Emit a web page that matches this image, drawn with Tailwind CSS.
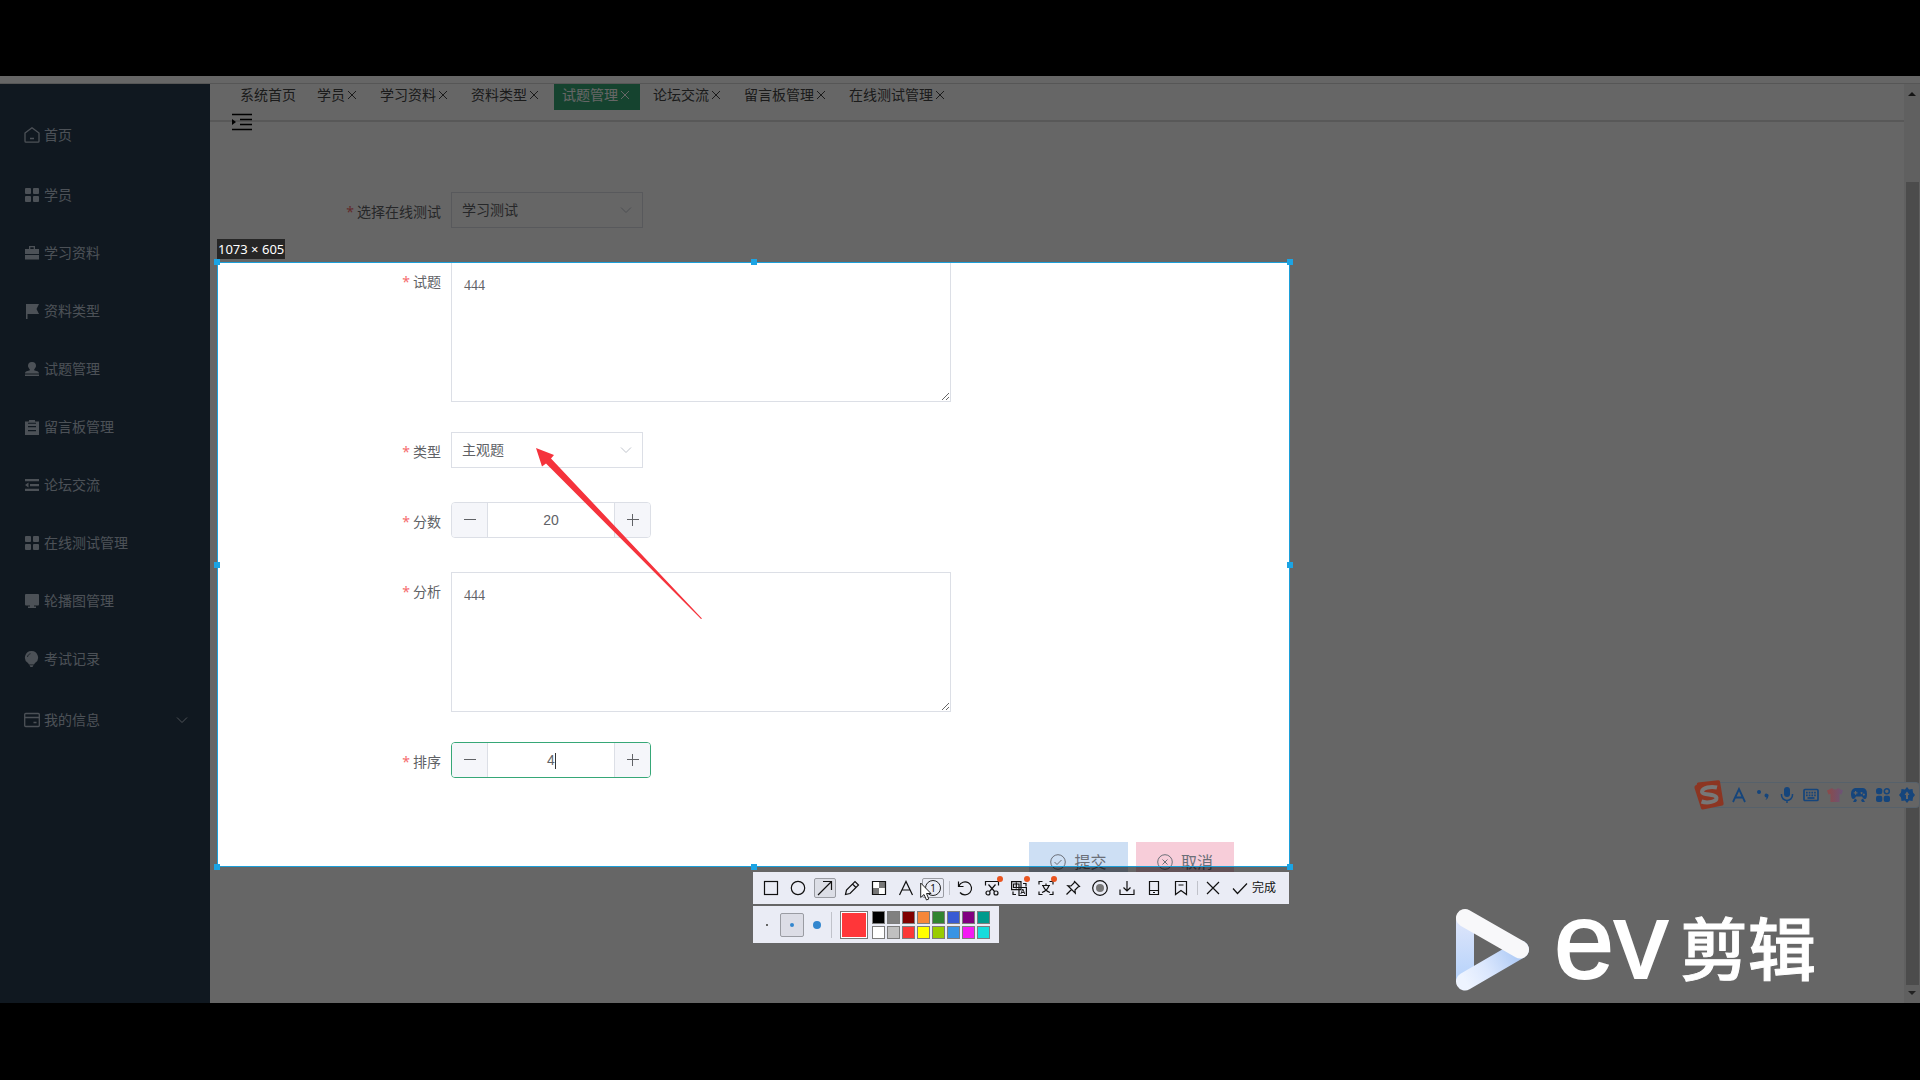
<!DOCTYPE html>
<html lang="zh-CN">
<head>
<meta charset="utf-8">
<title>试题管理</title>
<script src="https://cdn.jsdelivr.net/npm/@tailwindcss/browser@4"></script>
</head>
<body class="flex min-h-screen flex-col overflow-x-hidden bg-black pt-[76px] pb-[77px] font-['Noto_Sans','Noto_Sans_CJK_SC',sans-serif] text-sm text-[#606266]">
<div class="relative flex flex-1 flex-col overflow-hidden bg-white">
  <div class="h-2 shrink-0 border-b border-[#d8d8d8] bg-white"></div>
  <div class="flex flex-1">

    <!-- sidebar -->
    <nav class="w-[210px] shrink-0 bg-[#2a3c50] pt-5 text-[#bfcbd9]" aria-label="主菜单">
      <a href="#" class="flex h-[62px] items-center gap-1 pl-6">
        <svg class="size-4" viewBox="0 0 16 16" fill="none" stroke="currentColor" stroke-width="1.3"><path d="M1 6 8 .8 15 6v8.2a1 1 0 0 1-1 1H2a1 1 0 0 1-1-1zM6 11.5h4"/></svg>首页</a>
      <a href="#" class="flex h-[58px] items-center gap-1 pl-6">
        <svg class="size-4" viewBox="0 0 16 16" fill="currentColor"><rect x="1" y="1" width="6" height="6" rx="1"/><rect x="9" y="1" width="6" height="6" rx="1"/><rect x="1" y="9" width="6" height="6" rx="1"/><rect x="9" y="9" width="6" height="6" rx="1"/></svg>学员</a>
      <a href="#" class="flex h-[58px] items-center gap-1 pl-6">
        <svg class="size-4" viewBox="0 0 16 16" fill="currentColor"><path d="M5 1h6v3h4v5H1V4h4zm1.300 1.300V4h3.400V2.300zM1 10h14v4.500H1z"/></svg>学习资料</a>
      <a href="#" class="flex h-[58px] items-center gap-1 pl-6">
        <svg class="size-4" viewBox="0 0 16 16" fill="currentColor"><path d="M2 1h13l-2.500 5 2.500 5H3.500v5H2z"/></svg>资料类型</a>
      <a href="#" class="flex h-[58px] items-center gap-1 pl-6">
        <svg class="size-4" viewBox="0 0 16 16" fill="currentColor"><path d="M8 1a4 4 0 0 1 4 4c0 1.500-1.500 2.500-2 4 0 1 5 .5 5 3.500H1C1 9.500 6 10 6 9c-.5-1.500-2-2.500-2-4a4 4 0 0 1 4-4zM1 13.500h14V15H1z"/></svg>试题管理</a>
      <a href="#" class="flex h-[58px] items-center gap-1 pl-6">
        <svg class="size-4" viewBox="0 0 16 16" fill="currentColor" fill-rule="evenodd"><path d="M5 1h6v1.500h4V16H1V2.500h4zM4 3.800v1h8v-1zM4 7v1.200h8V7zM4 11v1.200h8V11z"/></svg>留言板管理</a>
      <a href="#" class="flex h-[58px] items-center gap-1 pl-6">
        <svg class="size-4" viewBox="0 0 16 16" fill="currentColor"><path d="M1 2h14v2.300H1zM6 6.900h9v2.300H6zM1 11.700h14V14H1zM1 8l3.500-2.500v5z"/></svg>论坛交流</a>
      <a href="#" class="flex h-[58px] items-center gap-1 pl-6">
        <svg class="size-4" viewBox="0 0 16 16" fill="currentColor"><rect x="1" y="1" width="6" height="6" rx="1"/><rect x="9" y="1" width="6" height="6" rx="1"/><rect x="1" y="9" width="6" height="6" rx="1"/><rect x="9" y="9" width="6" height="6" rx="1"/></svg>在线测试管理</a>
      <a href="#" class="flex h-[58px] items-center gap-1 pl-6">
        <svg class="size-4" viewBox="0 0 16 16" fill="currentColor"><rect x="1" y="1" width="14" height="11.500" rx="1"/><path d="M6 12h4v1.500h2V15H4v-1.500h2z"/></svg>轮播图管理</a>
      <a href="#" class="flex h-[58px] items-center gap-1 pl-6">
        <svg class="size-4" viewBox="0 0 16 16" fill="currentColor"><path d="M7.500 0a6.500 6.500 0 0 1 3.500 12l-1 1.500H5L4 12A6.500 6.500 0 0 1 7.500 0zM5.500 14.300h4L8.500 16h-2z"/><path d="M3.500 6c.3-1.800 1.200-2.800 3-3.300" fill="none" stroke="#2a3c50" stroke-width=".8"/></svg>考试记录</a>
      <a href="#" class="flex h-16 items-center gap-1 pr-[22px] pl-6">
        <svg class="size-4" viewBox="0 0 16 16" fill="none" stroke="currentColor" stroke-width="1.300"><rect x=".7" y="1.500" width="14.600" height="13" rx="1"/><path d="M1 5.500h14M9.500 10.500h3"/></svg>我的信息
        <svg class="ml-auto size-3" viewBox="0 0 12 12" fill="none" stroke="currentColor"><path d="m1 3.500 5 5 5-5"/></svg></a>
    </nav>

    <!-- page -->
    <main class="relative flex-1">
      <div class="flex h-[38px] items-start gap-[5px] border-b-2 border-[#dcdcdc] pl-[22px] leading-[22px] text-[#444]">
        <div class="flex h-[26px] px-2"><a href="#">系统首页</a></div>
        <div class="flex h-[26px] px-2"><a href="#">学员</a><button class="flex h-[22px] w-3.5 items-center justify-center" aria-label="关闭"><svg class="size-2.5" viewBox="0 0 10 10" stroke="currentColor"><path d="m1 1 8 8M9 1 1 9"/></svg></button></div>
        <div class="flex h-[26px] px-2"><a href="#">学习资料</a><button class="flex h-[22px] w-3.5 items-center justify-center" aria-label="关闭"><svg class="size-2.5" viewBox="0 0 10 10" stroke="currentColor"><path d="m1 1 8 8M9 1 1 9"/></svg></button></div>
        <div class="flex h-[26px] px-2"><a href="#">资料类型</a><button class="flex h-[22px] w-3.5 items-center justify-center" aria-label="关闭"><svg class="size-2.5" viewBox="0 0 10 10" stroke="currentColor"><path d="m1 1 8 8M9 1 1 9"/></svg></button></div>
        <div class="flex h-[26px] bg-[#36a777] px-2 text-white"><a href="#">试题管理</a><button class="flex h-[22px] w-3.5 items-center justify-center" aria-label="关闭"><svg class="size-2.5" viewBox="0 0 10 10" stroke="currentColor"><path d="m1 1 8 8M9 1 1 9"/></svg></button></div>
        <div class="flex h-[26px] px-2"><a href="#">论坛交流</a><button class="flex h-[22px] w-3.5 items-center justify-center" aria-label="关闭"><svg class="size-2.5" viewBox="0 0 10 10" stroke="currentColor"><path d="m1 1 8 8M9 1 1 9"/></svg></button></div>
        <div class="flex h-[26px] px-2"><a href="#">留言板管理</a><button class="flex h-[22px] w-3.5 items-center justify-center" aria-label="关闭"><svg class="size-2.5" viewBox="0 0 10 10" stroke="currentColor"><path d="m1 1 8 8M9 1 1 9"/></svg></button></div>
        <div class="flex h-[26px] px-2"><a href="#">在线测试管理</a><button class="flex h-[22px] w-3.5 items-center justify-center" aria-label="关闭"><svg class="size-2.5" viewBox="0 0 10 10" stroke="currentColor"><path d="m1 1 8 8M9 1 1 9"/></svg></button></div>
      </div>
      <button class="absolute top-7 left-[22px]" aria-label="折叠菜单"><svg class="size-5 text-black" viewBox="0 0 20 20" fill="none" stroke="currentColor" stroke-width="1.500"><path d="M0 2.500h20M8 7.500h12M8 12.500h12M0 17.500h20"/><path d="m0 7 4 3-4 3z" fill="currentColor" stroke="none"/></svg></button>

      <form class="flex flex-col gap-[30px] pt-[70px]">
        <div class="flex min-h-10 items-start">
          <label for="exam" class="w-[241px] pr-2.5 text-right leading-10"><span class="mr-[3px] text-[#f56c6c]">*</span>选择在线测试</label>
          <div class="relative"><select id="exam" class="h-9 w-48 appearance-none border border-[#dcdfe6] bg-white px-2.5"><option>学习测试</option></select>
          <svg class="absolute top-3 right-[11px] size-3 text-[#c0c4cc]" viewBox="0 0 12 12" fill="none" stroke="currentColor"><path d="m1 3.500 5 5 5-5"/></svg></div>
        </div>
        <div class="flex min-h-10 items-start">
          <label for="question" class="w-[241px] pr-2.5 text-right leading-10"><span class="mr-[3px] text-[#f56c6c]">*</span>试题</label>
          <textarea id="question" class="h-[140px] w-[500px] border border-[#dcdfe6] px-3 py-[13px] font-['Liberation_Serif',serif]">444</textarea>
        </div>
        <div class="flex min-h-10 items-start">
          <label for="kind" class="w-[241px] pr-2.5 text-right leading-10"><span class="mr-[3px] text-[#f56c6c]">*</span>类型</label>
          <div class="relative"><select id="kind" class="h-9 w-48 appearance-none border border-[#dcdfe6] bg-white px-2.5"><option>主观题</option></select>
          <svg class="absolute top-3 right-[11px] size-3 text-[#c0c4cc]" viewBox="0 0 12 12" fill="none" stroke="currentColor"><path d="m1 3.500 5 5 5-5"/></svg></div>
        </div>
        <div class="flex min-h-10 items-start">
          <label for="score" class="w-[241px] pr-2.5 text-right leading-10"><span class="mr-[3px] text-[#f56c6c]">*</span>分数</label>
          <div class="flex h-9 w-[200px] overflow-hidden rounded border border-[#dcdfe6]">
            <button type="button" class="flex w-9 items-center justify-center border-r border-[#dcdfe6] bg-[#f5f6fa]" aria-label="减少"><svg class="size-3" viewBox="0 0 12 12" stroke="currentColor"><path d="M0 5.500h12"/></svg></button>
            <input id="score" type="text" value="20" class="min-w-0 flex-1 text-center font-['Liberation_Sans',sans-serif]">
            <button type="button" class="flex w-9 items-center justify-center border-l border-[#dcdfe6] bg-[#f5f6fa]" aria-label="增加"><svg class="size-3" viewBox="0 0 12 12" stroke="currentColor"><path d="M0 5.500h12M5.500 0v12"/></svg></button>
          </div>
        </div>
        <div class="flex min-h-10 items-start">
          <label for="analysis" class="w-[241px] pr-2.5 text-right leading-10"><span class="mr-[3px] text-[#f56c6c]">*</span>分析</label>
          <textarea id="analysis" class="h-[140px] w-[500px] border border-[#dcdfe6] px-3 py-[13px] font-['Liberation_Serif',serif]">444</textarea>
        </div>
        <div class="flex min-h-10 items-start">
          <label for="order" class="w-[241px] pr-2.5 text-right leading-10"><span class="mr-[3px] text-[#f56c6c]">*</span>排序</label>
          <div class="relative flex h-9 w-[200px] overflow-hidden rounded border border-[#36a777]">
            <button type="button" class="flex w-9 items-center justify-center border-r border-[#dcdfe6] bg-[#f5f6fa]" aria-label="减少"><svg class="size-3" viewBox="0 0 12 12" stroke="currentColor"><path d="M0 5.500h12"/></svg></button>
            <input id="order" type="text" value="4" class="min-w-0 flex-1 text-center font-['Liberation_Sans',sans-serif]">
            <button type="button" class="flex w-9 items-center justify-center border-l border-[#dcdfe6] bg-[#f5f6fa]" aria-label="增加"><svg class="size-3" viewBox="0 0 12 12" stroke="currentColor"><path d="M0 5.500h12M5.500 0v12"/></svg></button>
            <span class="absolute top-2.5 left-[103px] h-4 w-px bg-[#333]"></span>
          </div>
        </div>
        <div class="flex gap-2 pt-[30px] pl-[819px] text-base text-[#6b6f78]">
          <button type="button" class="flex h-10 w-[99px] items-center justify-center gap-2 bg-[#cddff4]"><svg class="size-4" viewBox="0 0 16 16" fill="none" stroke="currentColor"><circle cx="8" cy="8" r="7.300"/><path d="m4.500 8 2.500 2.500L11.500 6"/></svg>提交</button>
          <button type="button" class="flex h-10 w-[98px] items-center justify-center gap-2 bg-[#f7cdd9]"><svg class="size-4" viewBox="0 0 16 16" fill="none" stroke="currentColor"><circle cx="8" cy="8" r="7.300"/><path d="m5.500 5.500 5 5m0-5-5 5"/></svg>取消</button>
        </div>
      </form>
    </main>

    <!-- scrollbar -->
    <div class="flex w-4 shrink-0 flex-col items-center bg-[#f1f1f1] py-1.5" aria-hidden="true">
      <svg class="h-2 w-2" viewBox="0 0 8 8"><path d="M0 6h8L4 2z" fill="#333"/></svg>
      <div class="mt-[84px] mb-1 w-[13px] flex-1 bg-[#bdbdbd]"></div>
      <svg class="h-2 w-2" viewBox="0 0 8 8"><path d="M0 2h8L4 6z" fill="#555"/></svg>
    </div>
  </div>

  <!-- screen capture selection -->
  <section class="absolute top-[186px] left-[217px] h-[605px] w-[1073px] border border-[#1c9fd9] shadow-[0_0_0_2400px_rgba(0,0,0,0.6)]" aria-label="截图区域">
    <div class="absolute bottom-full left-[-1px] mb-1 flex h-5 items-center bg-[#262626] px-px text-[13px] whitespace-nowrap text-white">1073 × 605</div>
    <i class="absolute -top-1 -left-1 size-1.5 bg-[#1ba4e4]"></i>
    <i class="absolute -top-1 left-1/2 -ml-[3px] size-1.5 bg-[#1ba4e4]"></i>
    <i class="absolute -top-1 -right-1 size-1.5 bg-[#1ba4e4]"></i>
    <i class="absolute top-1/2 -left-1 -mt-[3px] size-1.5 bg-[#1ba4e4]"></i>
    <i class="absolute top-1/2 -right-1 -mt-[3px] size-1.5 bg-[#1ba4e4]"></i>
    <i class="absolute -bottom-1 -left-1 size-1.5 bg-[#1ba4e4]"></i>
    <i class="absolute -bottom-1 left-1/2 -ml-[3px] size-1.5 bg-[#1ba4e4]"></i>
    <i class="absolute -right-1 -bottom-1 size-1.5 bg-[#1ba4e4]"></i>

    <svg class="absolute top-[185px] left-[318px] h-[171px] w-[166px]" viewBox="0 0 166 171" fill="#f5333c"><path d="m0 0 18 7-3 3.500 151 160-1 .5L10 15.500 6 18.500z"/></svg>

    <div class="absolute top-full right-0 mt-1.5 flex w-[536px] flex-col items-start gap-0.5 text-[#111]">
      <div class="flex h-8 w-full items-center bg-[#eaecf5] pl-[7px]">
        <button class="grid h-5 w-[22px] place-items-center" aria-label="矩形"><svg class="size-4" viewBox="0 0 16 16" fill="none" stroke="currentColor" stroke-width="1.200"><rect x="1.500" y="1.500" width="13" height="13"/></svg></button>
        <button class="ml-[5px] grid h-5 w-[22px] place-items-center" aria-label="椭圆"><svg class="size-4" viewBox="0 0 16 16" fill="none" stroke="currentColor" stroke-width="1.200"><circle cx="8" cy="8" r="6.700"/></svg></button>
        <button class="ml-[5px] grid h-5 w-[22px] place-items-center rounded-xs border border-[#9a9ca3] bg-[#dcdee6]" aria-label="箭头"><svg class="size-4" viewBox="0 0 16 16" fill="none" stroke="currentColor" stroke-width="1.200"><path d="M1 15 14.500 1.500M6 1.500h8.500V10"/></svg></button>
        <button class="ml-[5px] grid h-5 w-[22px] place-items-center" aria-label="画笔"><svg class="size-4" viewBox="0 0 16 16" fill="none" stroke="currentColor" stroke-width="1.200"><path d="m1.500 14.500 1-4.500 8.500-8.500 3.500 3.500L6 13.500zM8.500 4l3.500 3.500"/></svg></button>
        <button class="ml-[5px] grid h-5 w-[22px] place-items-center" aria-label="马赛克"><svg class="size-4" viewBox="0 0 16 16"><path d="M1.500 2h6.500v6H1.500zM8 8h6.500v6H8z" fill="#fff"/><path d="M8 2h6.500v6H8zM1.500 8H8v6H1.500z" fill="#777"/><path d="M1.500 1.500h13v13h-13z" fill="none" stroke="currentColor" stroke-width="1.200"/></svg></button>
        <button class="ml-[5px] grid h-5 w-[22px] place-items-center" aria-label="文字"><svg class="size-4" viewBox="0 0 16 16" fill="none" stroke="currentColor" stroke-width="1.200"><path d="M1.500 15 8 1.500 14.500 15M4 10h8"/></svg></button>
        <button class="ml-[5px] grid h-5 w-[22px] place-items-center rounded-xs border border-[#9a9ca3]" aria-label="序号"><span class="grid size-4 place-items-center rounded-full border border-[#222] text-[10px] leading-none">1</span></button>
        <i class="ml-[5px] h-3.5 w-px bg-[#c0c2ca]"></i>
        <button class="ml-1 grid h-5 w-[22px] place-items-center" aria-label="撤销"><svg class="size-4" viewBox="0 0 16 16" fill="none" stroke="currentColor" stroke-width="1.200"><path d="M1.500 1.500v5h5M2 6a6.500 6.500 0 1 1 1 6.500"/></svg></button>
        <button class="relative ml-[5px] grid h-5 w-[22px] place-items-center" aria-label="长截图"><svg class="size-4" viewBox="0 0 16 16" fill="none" stroke="currentColor" stroke-width="1.200"><path d="M1.500 5.500v-4h13v4M4.500 4.500l6 7M11.500 4.500l-6 7"/><circle cx="4" cy="13" r="2"/><circle cx="12" cy="13" r="2"/></svg><i class="absolute -top-0.5 right-0 size-1.5 rounded-full bg-[#ea5420]"></i></button>
        <button class="relative ml-[5px] grid h-5 w-[22px] place-items-center" aria-label="翻译"><svg class="size-4" viewBox="0 0 16 16" fill="none" stroke="currentColor" stroke-width="1.200"><path d="M.6 1.600h9.400v8H.6zM2.500 4h5.500v3.500H2.500zM5.300 2.500v6M12 3.500h3v3M2 11.500v3h3M8 7.500h7.400v8H8z"/><path d="m9.800 14 2-5 2 5m-3.300-1.500h2.600" stroke-width=".9"/></svg><i class="absolute -top-0.5 right-0 size-1.5 rounded-full bg-[#ea5420]"></i></button>
        <button class="relative ml-[5px] grid h-5 w-[22px] place-items-center" aria-label="文字识别"><svg class="size-4" viewBox="0 0 16 16" fill="none" stroke="currentColor" stroke-width="1.200"><path d="M1 4.500v-3h3.500M11.500 1.500H15v3M1 11.500v3h3.500M11.500 14.500H15v-3M4 5.500h8M8 3.500v2M11 5.500c-1 3-4 6-7 7M5 5.500c1 3 4 6 7 7"/></svg><i class="absolute -top-0.5 right-0 size-1.5 rounded-full bg-[#ea5420]"></i></button>
        <button class="ml-[5px] grid h-5 w-[22px] place-items-center" aria-label="钉住"><svg class="size-4" viewBox="0 0 16 16" fill="none" stroke="currentColor" stroke-width="1.200"><path d="m9.500 1.500 5 5-1.500.5-3 3 .3 3.200-7.500-7.500L6 6l3-3zM6.500 9.500l-5 5"/></svg></button>
        <button class="ml-[5px] grid h-5 w-[22px] place-items-center" aria-label="录屏"><svg class="size-4" viewBox="0 0 16 16" fill="none" stroke="currentColor" stroke-width="1.200"><circle cx="8" cy="8" r="7.300"/><circle cx="8" cy="8" r="4" fill="#777" stroke="none"/></svg></button>
        <button class="ml-[5px] grid h-5 w-[22px] place-items-center" aria-label="下载"><svg class="size-4" viewBox="0 0 16 16" fill="none" stroke="currentColor" stroke-width="1.200"><path d="M8 1v10M4.500 7.500 8 11l3.500-3.500M1 9.500v5h14v-5"/></svg></button>
        <button class="ml-[5px] grid h-5 w-[22px] place-items-center" aria-label="发送到手机"><svg class="size-4" viewBox="0 0 16 16" fill="none" stroke="currentColor" stroke-width="1.200"><path d="M3.500 1.500h9v13h-9zM3.500 10.500h9M7 12.500h2"/></svg></button>
        <button class="ml-[5px] grid h-5 w-[22px] place-items-center" aria-label="收藏"><svg class="size-4" viewBox="0 0 16 16" fill="none" stroke="currentColor" stroke-width="1.200"><path d="M2.500 1.500h11v13L8 10.500l-5.500 4zM5.500 5h5"/></svg></button>
        <i class="ml-[5px] h-3.5 w-px bg-[#c0c2ca]"></i>
        <button class="ml-1 grid h-5 w-[22px] place-items-center" aria-label="关闭"><svg class="size-4" viewBox="0 0 16 16" fill="none" stroke="currentColor" stroke-width="1.200"><path d="m2 2 12 12M14 2 2 14"/></svg></button>
        <button class="ml-2 flex h-5 items-center gap-1 text-xs"><svg class="size-4" viewBox="0 0 16 16" fill="none" stroke="currentColor" stroke-width="1.200"><path d="m1 8.500 4.500 5L15 3.500"/></svg>完成</button>
      </div>
      <div class="flex h-[37px] w-[246px] items-center bg-[#eaecf5] pl-[13px]">
        <button class="grid w-0.5 place-items-center" aria-label="细"><i class="size-0.5 bg-[#666]"></i></button>
        <button class="ml-3 grid size-6 place-items-center rounded-xs border border-[#9a9ca3] bg-[#dcdde6]" aria-label="中"><i class="size-1 rounded-full bg-[#3387cf]"></i></button>
        <button class="ml-[9px] grid size-2 place-items-center" aria-label="粗"><i class="size-2 rounded-full bg-[#3387cf]"></i></button>
        <i class="ml-2.5 h-[26px] w-px bg-[#c0c2ca]"></i>
        <button class="ml-2 size-7 border border-[#777] bg-[#ff3639] ring-1 ring-white ring-inset" aria-label="当前颜色"></button>
        <div class="ml-1 grid grid-cols-8 gap-0.5">
          <button class="size-[13px] border border-[#7d7d7d] bg-black" aria-label="黑"></button>
          <button class="size-[13px] border border-[#7d7d7d] bg-[#808080]" aria-label="灰"></button>
          <button class="size-[13px] border border-[#7d7d7d] bg-[#800000]" aria-label="深红"></button>
          <button class="size-[13px] border border-[#7d7d7d] bg-[#f6873a]" aria-label="橙"></button>
          <button class="size-[13px] border border-[#7d7d7d] bg-[#308430]" aria-label="绿"></button>
          <button class="size-[13px] border border-[#7d7d7d] bg-[#385ad3]" aria-label="蓝"></button>
          <button class="size-[13px] border border-[#7d7d7d] bg-[#800080]" aria-label="紫"></button>
          <button class="size-[13px] border border-[#7d7d7d] bg-[#009a8c]" aria-label="青绿"></button>
          <button class="size-[13px] border border-[#7d7d7d] bg-white" aria-label="白"></button>
          <button class="size-[13px] border border-[#7d7d7d] bg-[#c0c0c0]" aria-label="浅灰"></button>
          <button class="size-[13px] border border-[#7d7d7d] bg-[#fb3838]" aria-label="红"></button>
          <button class="size-[13px] border border-[#7d7d7d] bg-[#ffff00]" aria-label="黄"></button>
          <button class="size-[13px] border border-[#7d7d7d] bg-[#99cc00]" aria-label="黄绿"></button>
          <button class="size-[13px] border border-[#7d7d7d] bg-[#3894e4]" aria-label="天蓝"></button>
          <button class="size-[13px] border border-[#7d7d7d] bg-[#f31bf3]" aria-label="品红"></button>
          <button class="size-[13px] border border-[#7d7d7d] bg-[#16dcdc]" aria-label="青"></button>
        </div>
      </div>
    </div>
    <svg class="absolute top-[619px] left-[702px] h-[19px] w-3" viewBox="0 0 12 19"><path d="M.7 1v14.500L4 12.500l2.500 5.500 2.300-1L6.500 11.500H11z" fill="#fff" stroke="#222"/></svg>
  </section>

  <!-- input method bar -->
  <div class="absolute top-[704px] right-0 flex h-[30px] items-center text-[#15457c]">
    <svg class="z-10 -mr-3.5 size-[30px]" viewBox="0 0 30 30"><path d="M3 4.500Q2.500 3 4 2.600L24 .3q1.500-.2 2 1.300l3.600 22q.2 1.500-1.200 1.800L9 29.500q-1.500.2-2-1.200L.5 8Q0 6 2 5z" fill="#8c3522"/><path d="M23 7.500C17 6 8.500 7.500 8 11.500c-.3 4 14 2 14.500 6.300.4 4-9 5.700-15 3.700" fill="none" stroke="#777" stroke-width="4"/></svg>
    <div class="flex h-[26px] items-center gap-2 rounded border border-[#56616b] bg-[#656565] pr-1 pl-5">
      <svg class="size-4" viewBox="0 0 16 16" fill="none" stroke="currentColor" stroke-width="1.800"><path d="M2 15 8 2l6 13M4.500 10.500h7"/></svg>
      <svg class="size-4" viewBox="0 0 16 16" fill="currentColor"><circle cx="4" cy="5" r="2"/><path d="M9.500 8.500a2 2 0 1 1 3.800 1c-.2 2-1.300 3-3 3.500 1-1 1.200-1.500 1.200-2.500-1 0-2-.8-2-2z"/></svg>
      <svg class="size-4" viewBox="0 0 16 16" fill="currentColor"><rect x="5" y="0" width="6" height="10" rx="3"/><path d="M2.500 7v1a5.500 5.500 0 0 0 11 0V7M8 13.500V16" fill="none" stroke="currentColor" stroke-width="1.500"/></svg>
      <svg class="size-4" viewBox="0 0 16 16" fill="none" stroke="currentColor" stroke-width="1.700"><rect x="1" y="2.500" width="14" height="11" rx="1"/><path d="M3 5.700h10M3 8.300h10" stroke-dasharray="1.700 1"/><path d="M4.500 11h7"/></svg>
      <svg class="size-4" viewBox="0 0 16 16"><defs><linearGradient id="shirt" x1="0" y1="0" x2="1" y2="0"><stop offset="0" stop-color="#8c4a48"/><stop offset="1" stop-color="#6a5478"/></linearGradient></defs><path d="M5 1q3 3 6 0l5 2.500-1.500 4-2-.5v8h-9V7l-2 .5L0 3.500z" fill="url(#shirt)"/></svg>
      <svg class="size-4" viewBox="0 0 16 16" fill="currentColor" fill-rule="evenodd"><path d="M4 1h8q4 .5 4 6t-2.500 5Q12 11.500 11 9.500H5Q4 11.500 2.500 12 0 12 0 7t4-6zm0 3v1.300H2.700v1.200H4v1.300h1.200V6.500h1.300V5.300H5.200V4zm6.500 1a1 1 0 1 0 .1 0zm2.300 1.500a1 1 0 1 0 .1 0z"/><path d="m4 11.500-2 3.500h3l1-2zM12 11.500l2 3.500h-3l-1-2z"/></svg>
      <svg class="size-4" viewBox="0 0 16 16" fill="currentColor"><rect x="1" y="1" width="6.300" height="6.300" rx="2.500"/><circle cx="11.800" cy="4.200" r="2.500" fill="none" stroke="currentColor" stroke-width="1.500"/><rect x="1" y="8.700" width="6.300" height="6.300" rx="2"/><rect x="8.700" y="8.700" width="6.300" height="6.300" rx="2"/></svg>
      <svg class="size-4" viewBox="0 0 16 16" fill="currentColor"><path d="m8 0 2 2.500 3.500-.5.500 3.500L16 8l-2 2.500-.5 3.500-3.500-.5L8 16l-2-2.500-3.500.5-.5-3.500L0 8l2-2.500L2.500 2l3.500.5z"/><path d="M8 4.500 10.500 8H9v4H7V8H5.500z" fill="#656565"/></svg>
    </div>
  </div>

  <!-- editor watermark -->
  <div class="absolute right-[104px] bottom-3 flex h-[84px] items-center text-white">
    <svg class="mr-6 h-[83px] w-[75px]" viewBox="0 0 75 83" fill="none" stroke-width="18" stroke-linecap="round" stroke-linejoin="round">
      <defs>
        <linearGradient id="side" x1="0" y1="0" x2="0" y2="1" gradientUnits="objectBoundingBox"><stop offset="0" stop-color="#dfe6fa"/><stop offset="1" stop-color="#b5d2fb"/></linearGradient>
        <linearGradient id="base" x1="10" y1="73" x2="64" y2="42" gradientUnits="userSpaceOnUse"><stop offset="0" stop-color="#eef4ff"/><stop offset=".4" stop-color="#dbe7fd"/><stop offset="1" stop-color="#aac8f5"/></linearGradient>
      </defs>
      <path d="M1 10h18v63H1z" fill="url(#side)" stroke="none"/>
      <path d="m10 73.500 55-32" stroke="url(#base)"/>
      <path d="m10 10 55 31.500" stroke="#f8f8fa"/>
    </svg>
    <span class="pb-4 font-['Liberation_Sans',sans-serif] text-[108px] leading-[108px] [-webkit-text-stroke:2px_white]">ev</span><span class="ml-3 text-[68px] leading-[84px] font-medium [-webkit-text-stroke:1px_white]">剪辑</span>
  </div>
</div>
</body>
</html>
